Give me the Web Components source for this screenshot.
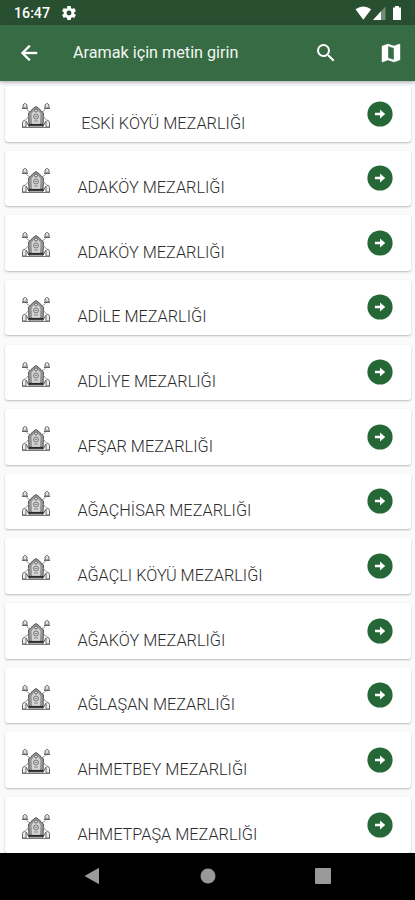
<!DOCTYPE html>
<html lang="tr">
<head>
<meta charset="utf-8">
<meta name="viewport" content="width=device-width, initial-scale=1">
<title>Mezarlıklar</title>
<style>
    body {
        margin: 0;
        font-family: Roboto, "Noto Sans", sans-serif;
    }
</style>
</head>
<body>
<cemetery-app></cemetery-app>

<script>
class StatusBar extends HTMLElement {
    constructor() {
        super()
        this.attachShadow({mode: 'open'})
        this.shadowRoot.innerHTML = /*html*/`
            <style>
                :host {
                    display: flex;
                    align-items: center;
                    box-sizing: border-box;
                    height: 24.5px;
                    padding: 1px 12px 0 14px;
                    background-color: #294f31;
                    color: #fff;
                    font-size: 14.2px;
                    font-weight: 500;
                }
                svg { display: block; fill: #fff; }
                .gear { margin-left: 12px; }
                .signals { margin-left: auto; }
            </style>
            <span><slot></slot></span>
            <svg class="gear" width="14" height="14" viewBox="2 2 20 20">
                <path d="M19.43 12.98c.04-.32.07-.64.07-.98s-.03-.66-.07-.98l2.110-1.650c.19-.15.24-.42.12-.64l-2-3.460c-.12-.22-.39-.3-.61-.22l-2.490 1c-.52-.4-1.080-.73-1.690-.98l-.38-2.650C14.460 2.180 14.250 2 14 2h-4c-.25 0-.46.18-.49.42l-.38 2.650c-.61.25-1.170.59-1.690.98l-2.490-1c-.23-.09-.49 0-.61.22l-2 3.460c-.13.22-.07.49.12.64l2.110 1.650c-.04.32-.07.65-.07.98s.03.66.07.98l-2.110 1.650c-.19.15-.24.42-.12.64l2 3.460c.12.22.39.3.61.22l2.490-1c.52.4 1.080.73 1.690.98l.38 2.650c.03.24.24.42.49.42h4c.25 0 .46-.18.49-.42l.38-2.650c.61-.25 1.170-.59 1.690-.98l2.490 1c.23.09.49 0 .61-.22l2-3.460c.12-.22.07-.49-.12-.64l-2.110-1.650zM12 15.500a3.500 3.500 0 1 1 0-7 3.500 3.500 0 0 1 0 7z"/>
            </svg>
            <svg class="signals" width="48" height="16" viewBox="0 0 48 16">
                <path d="M.5 4.200Q8.300-1.200 16.200 4.200L8.300 14.700z"/>
                <path d="M30.500 1.500V15H18z" opacity=".35"/>
                <path d="M26 6.300V15H18z"/>
                <path d="M38 2.500h2V1h4v1.500h2V15h-8z"/>
            </svg>
        `
    }
}

class AppBar extends HTMLElement {
    constructor() {
        super()
        this.attachShadow({mode: 'open'})
        this.shadowRoot.innerHTML = /*html*/`
            <style>
                :host {
                    display: flex;
                    align-items: center;
                    box-sizing: border-box;
                    height: 56.5px;
                    padding: 0 12px 0 17px;
                    background-color: #376b43;
                    color: #f2f7f3;
                    font-size: 16.2px;
                    box-shadow: 0 1px 4px rgba(40, 50, 70, .45);
                    z-index: 1;
                }
                svg { display: block; fill: #fff; }
                .title { margin-left: 32px; white-space: nowrap; }
                .search { margin-left: auto; }
                .map { margin-left: 41px; }
            </style>
            <svg width="24" height="24" viewBox="0 0 24 24">
                <path d="M20 11H7.830l5.590-5.590L12 4l-8 8 8 8 1.410-1.410L7.830 13H20z" stroke="#fff" stroke-width=".4"/>
            </svg>
            <span class="title"><slot></slot></span>
            <svg class="search" width="24" height="24" viewBox="0 0 24 24">
                <path d="M15.500 14h-.79l-.28-.27A6.470 6.470 0 0 0 16 9.500 6.500 6.500 0 1 0 9.500 16c1.610 0 3.090-.59 4.230-1.570l.27.28v.79l5 4.990L20.490 19zm-6 0a4.500 4.500 0 1 1 0-9 4.500 4.500 0 0 1 0 9z"/>
            </svg>
            <svg class="map" width="24" height="24" viewBox="0 0 24 24">
                <path d="M20.500 3l-.16.03L15 5.100 9 3 3.360 4.900c-.21.07-.36.25-.36.48V20.500c0 .28.22.5.5.5l.16-.03L9 18.900l6 2.100 5.640-1.900c.21-.07.36-.25.36-.48V3.500c0-.28-.22-.5-.5-.5zM15 19l-6-2.110V5l6 2.110z" stroke="#fff" stroke-width=".4"/>
            </svg>
        `
    }
}

class CemeteryCard extends HTMLElement {
    constructor() {
        super()
        this.attachShadow({mode: 'open'})
        this.shadowRoot.innerHTML = /*html*/`
            <style>
                :host {
                    display: flex;
                    align-items: flex-start;
                    box-sizing: border-box;
                    flex: none;
                    height: 55.5px;
                    padding: 0 18px 0 16px;
                    border-radius: 3px;
                    background-color: #fff;
                    box-shadow: 0 1px 2px rgba(0, 0, 0, .26);
                }
                svg { display: block; flex: none; }
                .grave { margin-top: 16px; }
                .name {
                    margin: 27.5px 0 0 26.4px;
                    color: #2c2c2c;
                    font-size: 16.3px;
                    font-weight: 300;
                    line-height: 20px;
                    white-space: pre;
                }
                .go { margin: 14.5px 0 0 auto; }
            </style>
            <svg class="grave" width="30" height="28" viewBox="0 0 30 28" fill="none" stroke-width="1">
                <path d="M2 6V3l1.500-1.500h1L6 3v3zM1 6.500h6M24 6V3l1.500-1.500h1L28 3v3zM23 6.500h6" fill="#ddd" stroke="#666"/>
                <path d="M5.500 7.500L9 10M24.500 7.500L21 10" stroke="#999"/>
                <path d="M8 24l-.5-13L10 9l1.500-2L15 4.500 18.500 7 20 9l2.500 2-.5 13z" fill="#999" stroke="#555"/>
                <path d="M10.500 22.500L10 12l2.500-3.500h5L20 12l-.5 10.500z" fill="#d4d4d4" stroke="#888" stroke-width=".8"/>
                <circle cx="15" cy="8.500" r="1.500" fill="#ddd" stroke="#666"/>
                <circle cx="15" cy="14.500" r="2.500" stroke="#777"/>
                <path d="M13.500 14.500h3M13 19h4" stroke="#888"/>
                <path d="M7.500 14.500L4.500 18M22.500 14.500L25.500 18" stroke="#999"/>
                <path d="M1.500 25v-4.500Q3 16.500 5 19.500V25zM28.500 25v-4.500Q27 16.500 25 19.500V25z" fill="#eee" stroke="#666"/>
                <path d="M5 19l3.500 6M25 19l-3.500 6" stroke="#666"/>
                <path d="M7.500 22.800h15" stroke="#2a2a2a" stroke-width="1.800"/>
                <path d="M1 25.500h28" stroke="#777"/>
            </svg>
            <span class="name"><slot></slot></span>
            <svg class="go" width="26" height="26" viewBox="0 0 26 26">
                <circle cx="13" cy="13" r="12.600" fill="#266737"/>
                <path d="M8 11.700h5V8.500L18.200 13 13 17.500v-3.200H8z" fill="#fff"/>
            </svg>
        `
    }
}

class NavBar extends HTMLElement {
    constructor() {
        super()
        this.attachShadow({mode: 'open'})
        this.shadowRoot.innerHTML = /*html*/`
            <style>
                :host {
                    display: flex;
                    justify-content: space-between;
                    align-items: center;
                    box-sizing: border-box;
                    height: 47.5px;
                    padding: 0 84px;
                    background-color: #000;
                    z-index: 1;
                }
                svg { display: block; fill: #999; }
            </style>
            <svg width="16" height="18" viewBox="0 0 16 18"><path d="M15 .8v16.400L.5 9z"/></svg>
            <svg width="16" height="16" viewBox="0 0 16 16"><circle cx="8" cy="8" r="7.500"/></svg>
            <svg width="16" height="16" viewBox="0 0 16 16"><rect width="16" height="16" rx="1"/></svg>
        `
    }
}

class CemeteryApp extends HTMLElement {
    names = [
        ' ESKİ KÖYÜ MEZARLIĞI',
        'ADAKÖY MEZARLIĞI',
        'ADAKÖY MEZARLIĞI',
        'ADİLE MEZARLIĞI',
        'ADLİYE MEZARLIĞI',
        'AFŞAR MEZARLIĞI',
        'AĞAÇHİSAR MEZARLIĞI',
        'AĞAÇLI KÖYÜ MEZARLIĞI',
        'AĞAKÖY MEZARLIĞI',
        'AĞLAŞAN MEZARLIĞI',
        'AHMETBEY MEZARLIĞI',
        'AHMETPAŞA MEZARLIĞI'
    ]

    constructor() {
        super()
        this.attachShadow({mode: 'open'})
    }

    connectedCallback() {
        this.shadowRoot.innerHTML = /*html*/`
            <style>
                :host {
                    display: flex;
                    flex-direction: column;
                    height: 900px;
                    background-color: #fafafa;
                }
                .list {
                    display: flex;
                    flex: 1;
                    flex-direction: column;
                    gap: 9.15px;
                    min-height: 0;
                    padding: 5px 4px 0 5px;
                    overflow: hidden;
                }
            </style>
            <status-bar>16:47</status-bar>
            <app-bar>Aramak için metin girin</app-bar>
            <main class="list">
                ${this.names.map(name => /*html*/`<cemetery-card>${name}</cemetery-card>`).join('')}
            </main>
            <nav-bar></nav-bar>
        `
    }
}

customElements.define('status-bar', StatusBar)
customElements.define('app-bar', AppBar)
customElements.define('cemetery-card', CemeteryCard)
customElements.define('nav-bar', NavBar)
customElements.define('cemetery-app', CemeteryApp)
</script>
</body>
</html>
